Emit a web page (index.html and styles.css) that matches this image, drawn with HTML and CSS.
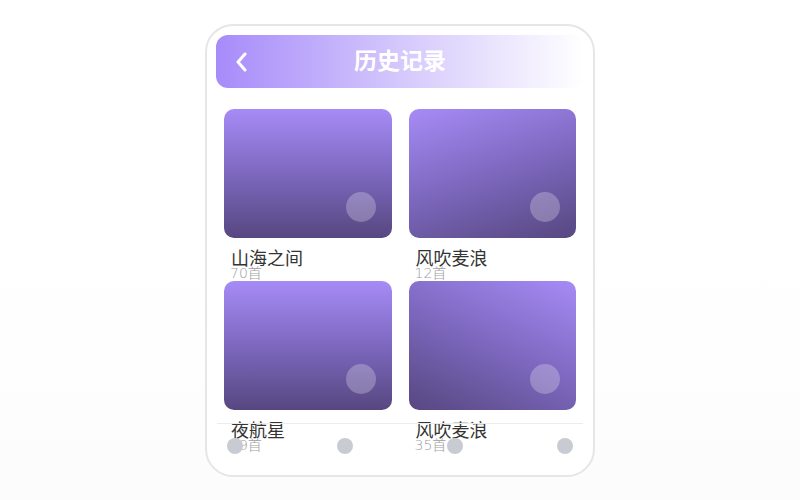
FILE: index.html
```html
<!DOCTYPE html>
<html lang="zh-CN">
<head>
    <meta charset="UTF-8">
    <meta name="viewport" content="width=device-width, initial-scale=1.0">
    <title>历史记录</title>
    <link rel="stylesheet" href="styles.css">
</head>
<body>
    <div class="phone">
        <div class="header">
            <svg class="back-icon" width="14" height="20" viewBox="0 0 14 20">
                <path d="M10 2 L3 10 L10 18" fill="none" stroke="#fff" stroke-width="3" stroke-linecap="round" stroke-linejoin="round"/>
            </svg>
            <h1>历史记录</h1>
        </div>

        <div class="album-grid">
            <div class="album">
                <div class="cover cover-down"><span class="play-dot"></span></div>
                <div class="album-name">山海之间</div>
                <div class="album-count">70首</div>
            </div>
            <div class="album">
                <div class="cover cover-right"><span class="play-dot"></span></div>
                <div class="album-name">风吹麦浪</div>
                <div class="album-count">12首</div>
            </div>
            <div class="album">
                <div class="cover cover-down"><span class="play-dot"></span></div>
                <div class="album-name">夜航星</div>
                <div class="album-count">29首</div>
            </div>
            <div class="album">
                <div class="cover cover-left"><span class="play-dot"></span></div>
                <div class="album-name">风吹麦浪</div>
                <div class="album-count">35首</div>
            </div>
        </div>

        <div class="tab-bar">
            <span class="tab-dot"></span>
            <span class="tab-dot"></span>
            <span class="tab-dot"></span>
            <span class="tab-dot"></span>
        </div>
    </div>
</body>
</html>
```

FILE: styles.css
```css
body {
    margin: 0;
    height: 500px;
    font-family: "DejaVu Sans", "Noto Sans CJK SC", sans-serif;
    background: linear-gradient(180deg, #ffffff 50%, #fcfcfd 100%);
    display: flex;
    justify-content: center;
    padding-top: 24px;
    box-sizing: border-box;
}
.phone {
    position: relative;
    width: 390px;
    height: 453px;
    box-sizing: border-box;
    border: 2px solid #e6e6ea;
    border-radius: 28px;
    background-color: #fff;
    padding: 9px 9px 0 9px;
    overflow: hidden;
}
.header {
    position: relative;
    height: 53px;
    border-radius: 12px;
    background: linear-gradient(90deg, #a78bfa 0%, #d4c8fc 50%, #ffffff 100%);
    display: flex;
    align-items: center;
    justify-content: center;
}
.back-icon {
    position: absolute;
    left: 19px;
    top: 17px;
}
.header h1 {
    margin: 0 0 4px 0;
    color: #fff;
    font-family: "Noto Sans CJK SC", sans-serif;
    font-size: 23px;
    font-weight: 700;
    line-height: 1;
}
.album-grid {
    display: grid;
    grid-template-columns: 1fr 1fr;
    column-gap: 17px;
    row-gap: 1px;
    padding: 21px 8px 0 8px;
}
.cover {
    position: relative;
    height: 129px;
    border-radius: 10px;
}
.cover-down {
    background: linear-gradient(180deg, #a68bf6 0%, #7d68bf 50%, #574780 100%);
}
.cover-right {
    background: linear-gradient(162deg, #a68bf6 0%, #7d68bf 50%, #574780 100%);
}
.cover-left {
    background: linear-gradient(205deg, #a68bf6 0%, #7d68bf 50%, #574780 100%);
}
.play-dot {
    position: absolute;
    right: 16px;
    bottom: 16px;
    width: 30px;
    height: 30px;
    border-radius: 50%;
    background-color: rgba(255, 255, 255, 0.25);
}
.album-name {
    margin-top: 14px;
    padding-left: 7px;
    font-size: 18px;
    line-height: 14px;
    color: #333;
}
.album-count {
    padding-left: 6px;
    font-size: 14px;
    font-weight: 300;
    line-height: 14px;
    color: #9d9da3;
}
.tab-bar {
    position: absolute;
    left: 10px;
    right: 10px;
    bottom: 7px;
    height: 44px;
    border-top: 1px solid #ececef;
    padding: 0 10px;
    display: flex;
    align-items: center;
    justify-content: space-between;
}
.tab-dot {
    width: 16px;
    height: 16px;
    border-radius: 50%;
    background-color: #c8ccd2;
}
```
